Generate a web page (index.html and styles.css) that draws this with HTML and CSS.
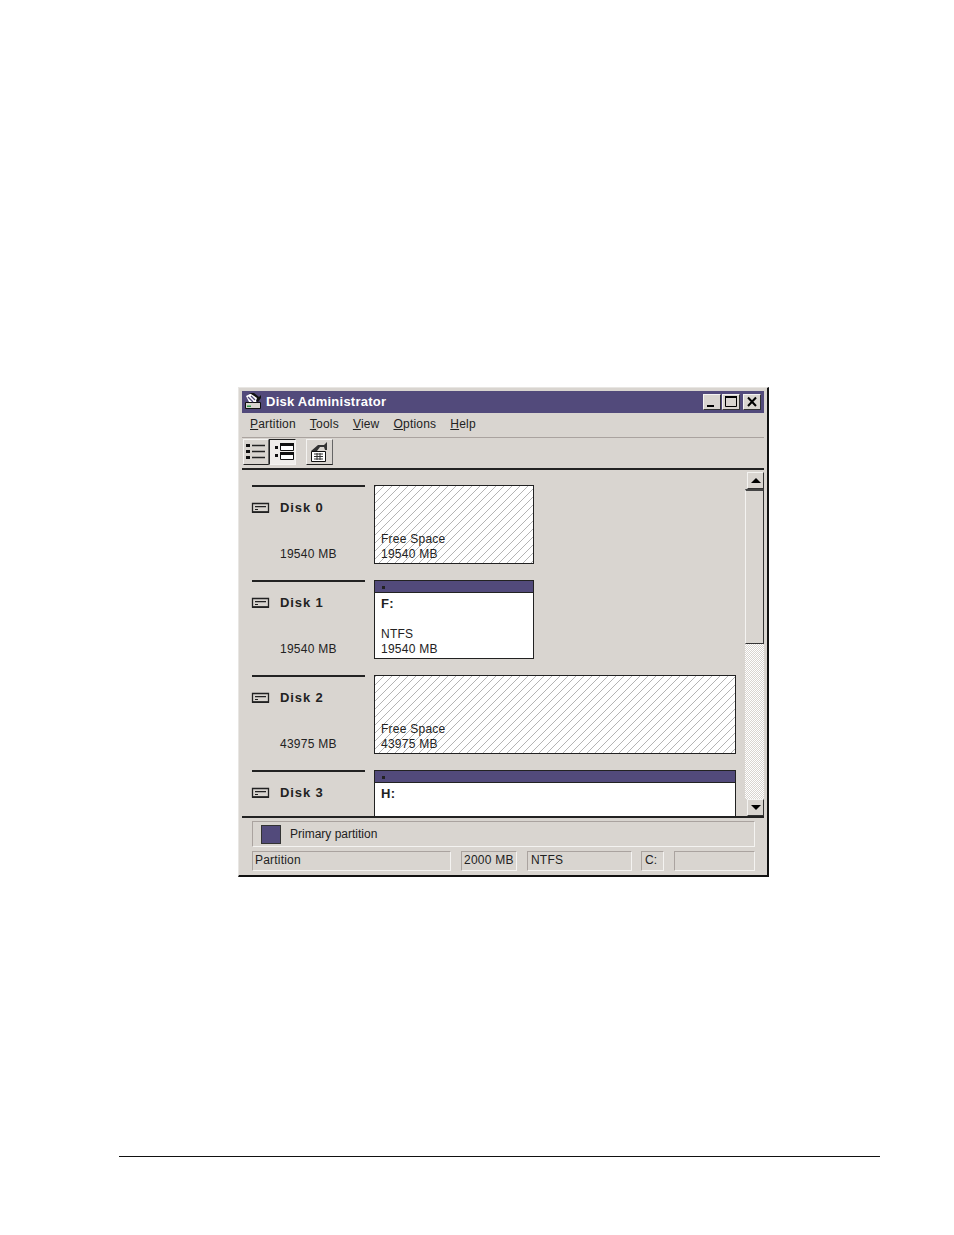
FILE: index.html
```html
<!DOCTYPE html>
<html lang="en">
<head>
    <meta charset="UTF-8">
    <meta name="viewport" content="width=device-width, initial-scale=1.0">
    <title>Disk Administrator</title>
    <link rel="stylesheet" href="styles.css">
</head>
<body>
    <div class="window">
        <div class="titlebar">
            <svg class="title-icon" width="20" height="20" viewBox="0 0 20 20">
                <path d="M1.500 11.500h15v6h-15z" fill="#d9d5d0" stroke="#111"/>
                <path d="M3 14.500h4v1.500H3z" fill="#2f9a4a"/>
                <path d="M2 5l6-3 6 5-2 4H5z" fill="#fff"/>
                <path d="M5 2h5l5 4 2-2v3l-3 4-2-1 1-3-6-4z" fill="#111"/>
                <path d="M4 6l5 5M7 5l4 4" stroke="#524a7b" stroke-width="1.300"/>
            </svg>
            <span class="title-text">Disk Administrator</span>
            <div class="title-buttons">
                <div class="win-btn">
                    <svg width="16" height="14" viewBox="0 0 16 14"><path d="M3 10h7v2H3z" fill="#000"/></svg>
                </div>
                <div class="win-btn win-btn-max">
                    <svg width="16" height="14" viewBox="0 0 16 14"><path d="M2.500 1.500h11v10h-11z" fill="none" stroke="#000"/><path d="M2 1h12v2H2z" fill="#000"/></svg>
                </div>
                <div class="win-btn win-btn-close">
                    <svg width="16" height="14" viewBox="0 0 16 14"><path d="M4 2.500l8 8.500M12 2.500l-8 8.500" stroke="#000" stroke-width="2"/></svg>
                </div>
            </div>
        </div>

        <div class="menubar">
            <span class="menu-item"><u>P</u>artition</span>
            <span class="menu-item"><u>T</u>ools</span>
            <span class="menu-item"><u>V</u>iew</span>
            <span class="menu-item"><u>O</u>ptions</span>
            <span class="menu-item"><u>H</u>elp</span>
        </div>

        <div class="toolbar">
            <div class="tool-btn">
                <svg width="22" height="20" viewBox="0 0 22 20">
                    <path d="M1 2h4v3H1zM1 8h4v3H1zM1 14h4v3H1z" fill="#111"/>
                    <path d="M7 3.500h13M7 9.500h13M7 15.500h13" stroke="#222" stroke-width="1.300"/>
                </svg>
            </div>
            <div class="tool-btn tool-btn-down">
                <svg width="22" height="20" viewBox="-2 0 22 20">
                    <path d="M1 4h3v3H1zM1 12h3v3H1z" fill="#111"/>
                    <path d="M6.500 1.500h13v7h-13zM6.500 10.500h13v7h-13z" fill="#fff" stroke="#111"/>
                    <path d="M6 1h14v3H6zM6 10h14v3H6z" fill="#111"/>
                </svg>
            </div>
            <div class="tool-btn tool-btn-props">
                <svg width="24" height="22" viewBox="0 0 24 22">
                    <path d="M3.500 10.500h14v10h-14z" fill="#fff" stroke="#111"/>
                    <path d="M6 13h9M6 15.500h9M6 18h9M9 12v7M12 12v7" stroke="#333"/>
                    <path d="M3 10l7-6h6l3-3v8h-2l-1-3h-4l-3 4z" fill="#333"/>
                </svg>
            </div>
        </div>

        <div class="client">
            <div class="disk-list">
                <div class="disk-row">
                    <div class="disk-label">
                        <div class="disk-name">
                            <svg class="disk-icon" width="20" height="12" viewBox="0 0 20 12"><path d="M1.500 1.500h16v8.500h-16z" fill="none" stroke="#222" stroke-width="1.300"/><path d="M1 9.500h17V11H1z" fill="#222"/><path d="M4 4h11v1.300H4zM4 7h3v1H4z" fill="#222"/></svg>
                            <b>Disk 0</b>
                        </div>
                        <div class="disk-size">19540 MB</div>
                    </div>
                    <div class="partition partition-free">
                        <div class="partition-body">
                            <div>Free Space</div>
                            <div>19540 MB</div>
                        </div>
                    </div>
                </div>

                <div class="disk-row">
                    <div class="disk-label">
                        <div class="disk-name">
                            <svg class="disk-icon" width="20" height="12" viewBox="0 0 20 12"><path d="M1.500 1.500h16v8.500h-16z" fill="none" stroke="#222" stroke-width="1.300"/><path d="M1 9.500h17V11H1z" fill="#222"/><path d="M4 4h11v1.300H4zM4 7h3v1H4z" fill="#222"/></svg>
                            <b>Disk 1</b>
                        </div>
                        <div class="disk-size">19540 MB</div>
                    </div>
                    <div class="partition partition-used">
                        <div class="partition-head"><span class="head-mark"></span></div>
                        <div class="partition-body">
                            <b class="drive">F:</b>
                            <div>NTFS</div>
                            <div>19540 MB</div>
                        </div>
                    </div>
                </div>

                <div class="disk-row">
                    <div class="disk-label">
                        <div class="disk-name">
                            <svg class="disk-icon" width="20" height="12" viewBox="0 0 20 12"><path d="M1.500 1.500h16v8.500h-16z" fill="none" stroke="#222" stroke-width="1.300"/><path d="M1 9.500h17V11H1z" fill="#222"/><path d="M4 4h11v1.300H4zM4 7h3v1H4z" fill="#222"/></svg>
                            <b>Disk 2</b>
                        </div>
                        <div class="disk-size">43975 MB</div>
                    </div>
                    <div class="partition partition-free partition-wide">
                        <div class="partition-body">
                            <div>Free Space</div>
                            <div>43975 MB</div>
                        </div>
                    </div>
                </div>

                <div class="disk-row">
                    <div class="disk-label">
                        <div class="disk-name">
                            <svg class="disk-icon" width="20" height="12" viewBox="0 0 20 12"><path d="M1.500 1.500h16v8.500h-16z" fill="none" stroke="#222" stroke-width="1.300"/><path d="M1 9.500h17V11H1z" fill="#222"/><path d="M4 4h11v1.300H4zM4 7h3v1H4z" fill="#222"/></svg>
                            <b>Disk 3</b>
                        </div>
                    </div>
                    <div class="partition partition-used partition-wide">
                        <div class="partition-head"><span class="head-mark"></span></div>
                        <div class="partition-body">
                            <b class="drive">H:</b>
                        </div>
                    </div>
                </div>
            </div>

            <div class="scrollbar">
                <div class="scroll-btn"><span class="arrow-up"></span></div>
                <div class="scroll-thumb"></div>
                <div class="scroll-track"></div>
                <div class="scroll-btn"><span class="arrow-down"></span></div>
            </div>
        </div>

        <div class="legend">
            <span class="legend-swatch"></span>
            <span>Primary partition</span>
        </div>

        <div class="statusbar">
            <div class="status-cell status-type">Partition</div>
            <div class="status-cell status-size">2000 MB</div>
            <div class="status-cell status-fs">NTFS</div>
            <div class="status-cell status-drive">C:</div>
            <div class="status-cell status-empty"></div>
        </div>
    </div>

    <hr class="page-rule">
</body>
</html>
```

FILE: styles.css
```css
body {
    margin: 0;
    height: 1235px;
    background-color: #ffffff;
    font-family: "Liberation Sans", Arial, sans-serif;
    font-size: 12px;
    color: #222222;
    overflow: hidden;
}

.window {
    width: 531px;
    height: 490px;
    margin: 387px 0 0 238px;
    box-sizing: border-box;
    padding: 4px 3px 0 3px;
    background: #d9d5d0;
    border-top: 1px solid #e8e6e3;
    border-left: 1px solid #e8e6e3;
    border-right: 2px solid #111111;
    border-bottom: 2px solid #111111;
    display: flex;
    flex-direction: column;
}

.titlebar {
    height: 22px;
    flex: none;
    margin-top: -1px;
    background: #524a7b;
    color: #ffffff;
    display: flex;
    align-items: center;
}

.title-icon {
    margin: -2px 2px 0 2px;
}

.title-text {
    font-weight: bold;
    font-size: 13px;
    letter-spacing: 0.25px;
    margin-top: -1px;
}

.title-buttons {
    margin-left: auto;
    margin-right: 3px;
    display: flex;
}

.win-btn {
    width: 18px;
    height: 16px;
    box-sizing: border-box;
    background: #d9d5d0;
    border: 1px solid;
    border-color: #f4f3f1 #333333 #333333 #f4f3f1;
    display: flex;
    align-items: center;
    justify-content: center;
}

.win-btn-max {
    margin-left: 1px;
}

.win-btn-close {
    margin-left: 3px;
}

.menubar {
    height: 24px;
    flex: none;
    display: flex;
    align-items: center;
    gap: 14px;
    padding: 0 0 4px 8px;
    border-bottom: 1px solid #aaa39f;
    box-sizing: border-box;
    margin-top: 1px;
    letter-spacing: 0.2px;
}

.toolbar {
    height: 32px;
    flex: none;
    box-sizing: border-box;
    display: flex;
    align-items: flex-end;
    padding: 0 0 3px 1px;
    border-bottom: 2px solid #222222;
}

.tool-btn {
    width: 26px;
    height: 26px;
    box-sizing: border-box;
    border: 1px solid;
    border-color: #f4f3f1 #666666 #222222 #f4f3f1;
    display: flex;
    align-items: center;
    justify-content: center;
}

.tool-btn-down {
    width: 27px;
    border-color: #222222 #f4f3f1 #f4f3f1 #222222;
    background: #efedea;
}

.tool-btn-props {
    margin-left: 10px;
    width: 27px;
}

.client {
    height: 348px;
    flex: none;
    display: flex;
    border-bottom: 2px solid #222222;
    box-sizing: border-box;
}

.disk-list {
    flex: 1;
    overflow: hidden;
    padding: 15px 0 0 10px;
    display: flex;
    flex-direction: column;
    gap: 16px;
}

.disk-row {
    flex: none;
    height: 79px;
    display: flex;
    gap: 9px;
}

.disk-label {
    width: 113px;
    flex: none;
    border-top: 2px solid #222222;
    box-sizing: border-box;
    display: flex;
    flex-direction: column;
    justify-content: space-between;
    padding-bottom: 3px;
}

.disk-name {
    display: flex;
    align-items: center;
    gap: 9px;
    margin-top: 13px;
    font-size: 13px;
    letter-spacing: 0.9px;
}

.disk-icon {
    margin-left: -1px;
}

.disk-size {
    padding-left: 28px;
    letter-spacing: 0.25px;
}

.partition {
    width: 160px;
    box-sizing: border-box;
    border: 1px solid #222222;
    display: flex;
    flex-direction: column;
    letter-spacing: 0.25px;
}

.partition-wide {
    width: 362px;
}

.partition-free {
    background: repeating-linear-gradient(135deg, #b4b4b4 0, #b4b4b4 1px, #ffffff 1px, #ffffff 5.66px);
    justify-content: flex-end;
}

.partition-used {
    background: #ffffff;
}

.partition-head {
    height: 12px;
    box-sizing: border-box;
    flex: none;
    background: #524a7b;
    border-bottom: 1px solid #222222;
    position: relative;
}

.head-mark {
    position: absolute;
    left: 7px;
    top: 5px;
    width: 3px;
    height: 3px;
    background: #222222;
}

.partition-body {
    padding: 0 6px 1px;
    line-height: 15px;
    flex: 1;
    display: flex;
    flex-direction: column;
    justify-content: flex-end;
}

.partition-free .partition-body {
    flex: none;
}

.drive {
    margin-bottom: auto;
    margin-top: 3px;
    font-size: 13px;
}

.scrollbar {
    width: 19px;
    flex: none;
    display: flex;
    flex-direction: column;
    padding-top: 2px;
    box-sizing: border-box;
}

.scroll-btn {
    height: 17px;
    flex: none;
    margin-left: 2px;
    box-sizing: border-box;
    background: #d9d5d0;
    border: 1px solid;
    border-color: #f4f3f1 #333333 #333333 #f4f3f1;
    display: flex;
    align-items: center;
    justify-content: center;
}

.arrow-up {
    border: 5px solid transparent;
    border-top: none;
    border-bottom-color: #000000;
}

.arrow-down {
    border: 5px solid transparent;
    border-bottom: none;
    border-top-color: #000000;
}

.scroll-thumb {
    height: 155px;
    flex: none;
    box-sizing: border-box;
    background: #d9d5d0;
    border: 1px solid;
    border-color: #444444 #333333 #333333 #f4f3f1;
    border-top-width: 2px;
}

.scroll-track {
    flex: 1;
    background: repeating-conic-gradient(#ffffff 0 25%, #d9d5d0 0 50%) 0 0 / 2px 2px;
}

.legend {
    height: 26px;
    flex: none;
    margin: 3px 9px 0 10px;
    box-sizing: border-box;
    border: 1px solid;
    border-color: #aaa39f #f4f3f1 #f4f3f1 #aaa39f;
    display: flex;
    align-items: center;
    gap: 9px;
    padding-left: 8px;
}

.legend-swatch {
    width: 20px;
    height: 19px;
    box-sizing: border-box;
    background: #524a7b;
    border: 1px solid #333333;
}

.statusbar {
    display: flex;
    margin: 4px 9px 0 10px;
    height: 20px;
    flex: none;
}

.status-cell {
    box-sizing: border-box;
    border: 1px solid;
    border-color: #aaa39f #f4f3f1 #f4f3f1 #aaa39f;
    padding-left: 3px;
    line-height: 17px;
    letter-spacing: 0.2px;
}

.status-type {
    width: 199px;
    padding-left: 2px;
}

.status-size {
    width: 56px;
    margin-left: 10px;
    padding-left: 2px;
    letter-spacing: 0.25px;
}

.status-fs {
    width: 105px;
    margin-left: 10px;
}

.status-drive {
    width: 23px;
    margin-left: 9px;
}

.status-empty {
    width: 81px;
    margin-left: 10px;
}

.page-rule {
    width: 761px;
    height: 1px;
    border: none;
    background: #111111;
    margin: 279px 0 0 119px;
}
```
